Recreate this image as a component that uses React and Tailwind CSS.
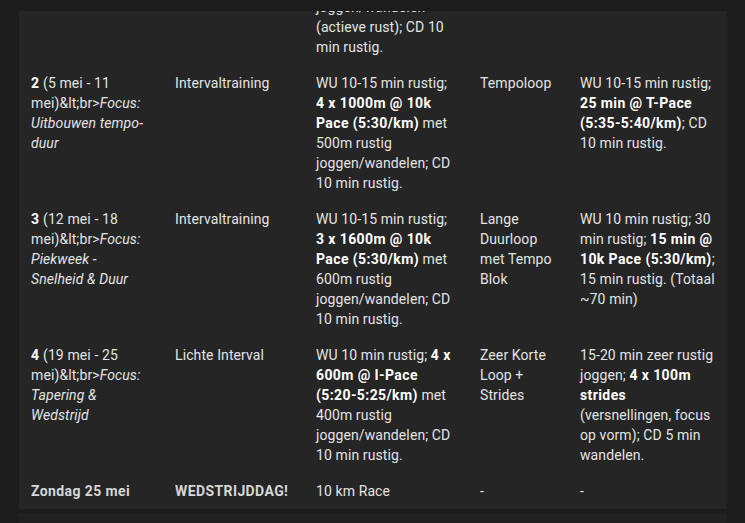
import React from 'react';

const B = ({ children }) => <b className="font-bold tracking-[0.4px] text-white">{children}</b>;

const rows = [
  {
    week: (
      <>
        <B>2</B> (5 mei - 11 mei)&amp;lt;br&gt;<i>Focus: Uitbouwen tempo-duur</i>
      </>
    ),
    type1: 'Intervaltraining',
    detail1: (
      <>
        WU 10-15 min rustig; <B>4 x 1000m @ 10k Pace (5:30/km)</B> met 500m rustig joggen/wandelen; CD 10 min rustig.
      </>
    ),
    type2: 'Tempoloop',
    detail2: (
      <>
        WU 10-15 min rustig; <B>25 min @ T-Pace (5:35-5:40/km)</B>; CD 10 min rustig.
      </>
    ),
  },
  {
    week: (
      <>
        <B>3</B> (12 mei - 18 mei)&amp;lt;br&gt;<i>Focus: Piekweek - Snelheid &amp; Duur</i>
      </>
    ),
    type1: 'Intervaltraining',
    detail1: (
      <>
        WU 10-15 min rustig; <B>3 x 1600m @ 10k Pace (5:30/km)</B> met 600m rustig joggen/wandelen; CD 10 min rustig.
      </>
    ),
    type2: 'Lange Duurloop met Tempo Blok',
    detail2: (
      <>
        WU 10 min rustig; 30 min rustig; <B>15 min @ 10k Pace (5:30/km)</B>; 15 min rustig. (Totaal ~70 min)
      </>
    ),
  },
  {
    week: (
      <>
        <B>4</B> (19 mei - 25 mei)&amp;lt;br&gt;<i>Focus: Tapering &amp; Wedstrijd</i>
      </>
    ),
    type1: 'Lichte Interval',
    detail1: (
      <>
        WU 10 min rustig; <B>4 x 600m @ I-Pace (5:20-5:25/km)</B> met 400m rustig joggen/wandelen; CD 10 min rustig.
      </>
    ),
    type2: 'Zeer Korte Loop + Strides',
    detail2: (
      <>
        15-20 min zeer rustig joggen; <B>4 x 100m strides</B> (versnellingen, focus op vorm); CD 5 min wandelen.
      </>
    ),
  },
  {
    week: <b className="font-bold tracking-[0.4px] text-[#d6d6d6]">Zondag 25 mei</b>,
    type1: <b className="font-bold tracking-[0.4px] text-[#d6d6d6]">WEDSTRIJDDAG!</b>,
    detail1: '10 km Race',
    type2: '-',
    detail2: '-',
  },
];

const cell = 'px-3 py-2 align-top';
const lastCell = 'pl-3 pr-[10px] py-2 align-top';

export default function App() {
  return (
    <div
      className="min-h-[523px] w-[745px] bg-[#1c1c1d] text-[14px] leading-5 tracking-[0.1px] text-[#e3e3e3]"
      style={{ fontFamily: 'Roboto, "Liberation Sans", sans-serif' }}
    >
      <div className="h-[11px]" />
      <div className="ml-[19px] w-[708px] overflow-hidden bg-[#252525]">
        <table className="-mt-[14px] w-[708px] table-fixed border-collapse text-left">
          <colgroup>
            <col className="w-[144px]" />
            <col className="w-[141px]" />
            <col className="w-[164px]" />
            <col className="w-[100px]" />
            <col className="w-[159px]" />
          </colgroup>
          <tbody>
            <tr>
              <td className="px-3 pb-2 align-top" />
              <td className="px-3 pb-2 align-top" />
              <td className="px-3 pb-2 align-top">joggen/wandelen (actieve rust); CD 10 min rustig.</td>
              <td className="px-3 pb-2 align-top" />
              <td className="pl-3 pr-[10px] pb-2 align-top" />
            </tr>
            {rows.map((r, i) => (
              <tr key={i}>
                <td className={cell}>{r.week}</td>
                <td className={cell}>{r.type1}</td>
                <td className={cell}>{r.detail1}</td>
                <td className={cell}>{r.type2}</td>
                <td className={lastCell}>{r.detail2}</td>
              </tr>
            ))}
          </tbody>
        </table>
      </div>
      <div className="ml-[19px] mt-[4px] h-[11px] w-[708px] bg-[#212121]" />
    </div>
  );
}
